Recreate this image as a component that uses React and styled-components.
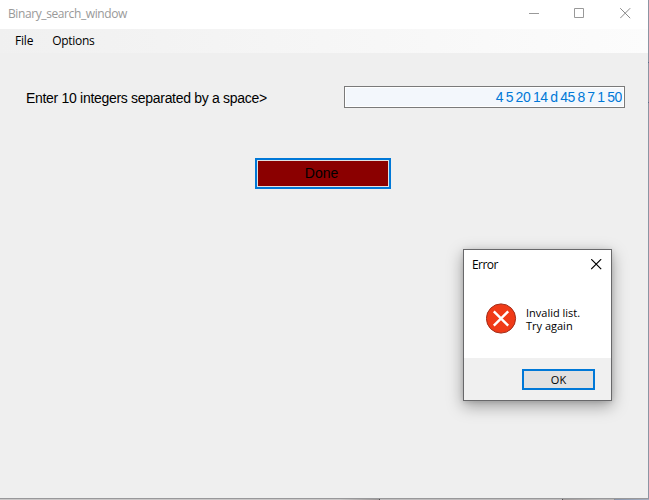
import React from 'react';
import styled, { createGlobalStyle } from 'styled-components';

const GlobalStyle = createGlobalStyle`
  * { box-sizing: border-box; }
  body { margin: 0; overflow: hidden; background: #b9b7b7; }
  button, input { font: inherit; margin: 0; }
`;

const Desktop = styled.div`
  position: relative;
  width: 649px;
  height: 500px;
  display: grid;
  grid-template-columns: 648px 1px;
  grid-template-rows: 499px 1px;
  overflow: hidden;
`;

const DesktopRight = styled.div`
  background: linear-gradient(#8c95a3 0 62px, #586c8c 62px 63px, #8c95a3 63px 102px, #586c8c 102px 103px, #8c95a3 103px);
`;

const DesktopBottom = styled.div`
  grid-column: 1 / -1;
  background: linear-gradient(90deg, #c9c7c7 0 340px, #9b9797 379px, #514d4f 379px 380px, #bebcbd 380px 562px, #514d4f 562px 563px, #a29c9c 563px, #b9b7b7 600px, #b9b7b7 614px, #8c8c92 614px 615px, #8995ac 615px, #a5afc0 649px);
`;

const Window = styled.main`
  display: flex;
  flex-direction: column;
  background: #efefef;
  border-bottom: 1px solid #98989a;
`;

const TitleBar = styled.header`
  display: flex;
  align-items: center;
  justify-content: space-between;
  height: 29px;
  padding: 0 17px 2px 8px;
  background: #fff;
  color: #999;
  font: 12px/16px "Open Sans", "Noto Sans", sans-serif;
`;

const Title = styled.span`
  letter-spacing: ${(p) => p.$spacing || 0}px;
`;

const Controls = styled.div`
  display: flex;
  gap: 35px;
  svg { display: block; }
`;

const MenuBar = styled.nav`
  display: flex;
  align-items: center;
  gap: 19px;
  height: 24px;
  padding: 0 15px;
  background: linear-gradient(90deg, #f0f0f0, #fcfcfc);
  color: #000;
  font: 12px/16px "Open Sans", "Noto Sans", sans-serif;
`;

const MenuItem = styled.span`
  letter-spacing: ${(p) => p.$spacing}px;
`;

const Form = styled.section`
  display: flex;
  flex-direction: column;
  align-items: center;
  padding-top: 33px;
  font: 14px/18px "Liberation Sans", Arial, sans-serif;
  color: #000;
`;

const Field = styled.label`
  display: flex;
  align-items: center;
  justify-content: space-between;
  width: 100%;
  height: 22px;
  padding: 0 23px 0 26px;
`;

const FieldLabel = styled.span`
  padding-top: 1px;
  letter-spacing: -0.3px;
`;

const Input = styled.input`
  width: 281px;
  height: 22px;
  border: 1px solid #7a7a7a;
  border-radius: 0;
  padding: 0 2px;
  outline: none;
  background: #f3f7fc;
  box-shadow: inset 0 0 0 1px #fff;
  color: #0078d7;
  text-align: right;
  letter-spacing: -0.4px;
  word-spacing: -0.95px;
`;

const DoneButton = styled.button`
  width: 136px;
  height: 31px;
  margin: 50px 2px 0 0;
  padding: 0 3px 1px 0;
  border: 2px solid #0078d7;
  border-radius: 0;
  background: #8b0000;
  box-shadow: inset 0 0 0 1px #e1e1e1;
  color: #000;
`;

const Dialog = styled.div`
  position: absolute;
  left: 463px;
  top: 249px;
  width: 149px;
  height: 152px;
  display: flex;
  flex-direction: column;
  border: 1px solid #68686a;
  background: #fff;
  box-shadow: 0 5px 15px rgba(0, 0, 0, 0.35), 0 1px 5px rgba(0, 0, 0, 0.12);
  color: #000;
  font: 11px/13px "Open Sans", "Noto Sans", sans-serif;
`;

const DialogHeader = styled.header`
  display: flex;
  align-items: center;
  justify-content: space-between;
  height: 29px;
  padding: 0 9px 0 8px;
  font-size: 12px;
  svg { display: block; }
`;

const DialogBody = styled.div`
  display: flex;
  align-items: center;
  gap: 9px;
  flex: 1;
  padding: 0 0 0 22px;
`;

const Message = styled.p`
  margin: 1px 0 0;
`;

const DialogFooter = styled.footer`
  display: flex;
  justify-content: flex-end;
  height: 42px;
  padding: 11px 16px 0 0;
  background: #f0f0f0;
`;

const OkButton = styled.button`
  width: 73px;
  height: 21px;
  padding: 0;
  border: 2px solid #0078d7;
  border-radius: 0;
  background: #e1e1e1;
  color: #000;
`;

const CloseIcon = ({ color, weight = 1 }) => (
  <svg width="11" height="11" viewBox="0 0 11 11" fill="none" stroke={color} strokeWidth={weight}>
    <path d="M.2.2l10 10M10.2.2l-10 10" />
  </svg>
);

export default function App() {
  return (
    <Desktop>
      <GlobalStyle />
      <Window>
        <TitleBar>
          <Title $spacing={-0.4}>Binary_search_window</Title>
          <Controls>
            <svg width="10" height="11" viewBox="0 0 10 11"><path d="M0 5.5h10" stroke="#999" /></svg>
            <svg width="11" height="11" viewBox="0 0 11 11">
              <path d="M.5.5h9v9h-9z" fill="none" stroke="#999" />
            </svg>
            <CloseIcon color="#888" />
          </Controls>
        </TitleBar>
        <MenuBar>
          <MenuItem $spacing={-0.2}>File</MenuItem>
          <MenuItem $spacing={-0.3}>Options</MenuItem>
        </MenuBar>
        <Form>
          <Field>
            <FieldLabel>Enter 10 integers separated by a space&gt;</FieldLabel>
            <Input defaultValue="4 5 20 14 d 45 8 7 1 50" />
          </Field>
          <DoneButton>Done</DoneButton>
        </Form>
      </Window>
      <DesktopRight />
      <DesktopBottom />
      <Dialog role="alertdialog">
        <DialogHeader>
          <Title $spacing={-0.55}>Error</Title>
          <CloseIcon color="#000" weight={1.2} />
        </DialogHeader>
        <DialogBody>
          <svg width="31" height="31" viewBox="0 0 31 31">
            <circle cx="15" cy="15.5" r="14.6" fill="#f03a17" stroke="#a22c18" />
            <path d="M7.8 8.3l14.4 14.4M22.2 8.3L7.8 22.7" stroke="#fff" strokeWidth="2.4" />
          </svg>
          <Message>Invalid list.<br />Try again</Message>
        </DialogBody>
        <DialogFooter>
          <OkButton>OK</OkButton>
        </DialogFooter>
      </Dialog>
    </Desktop>
  );
}
